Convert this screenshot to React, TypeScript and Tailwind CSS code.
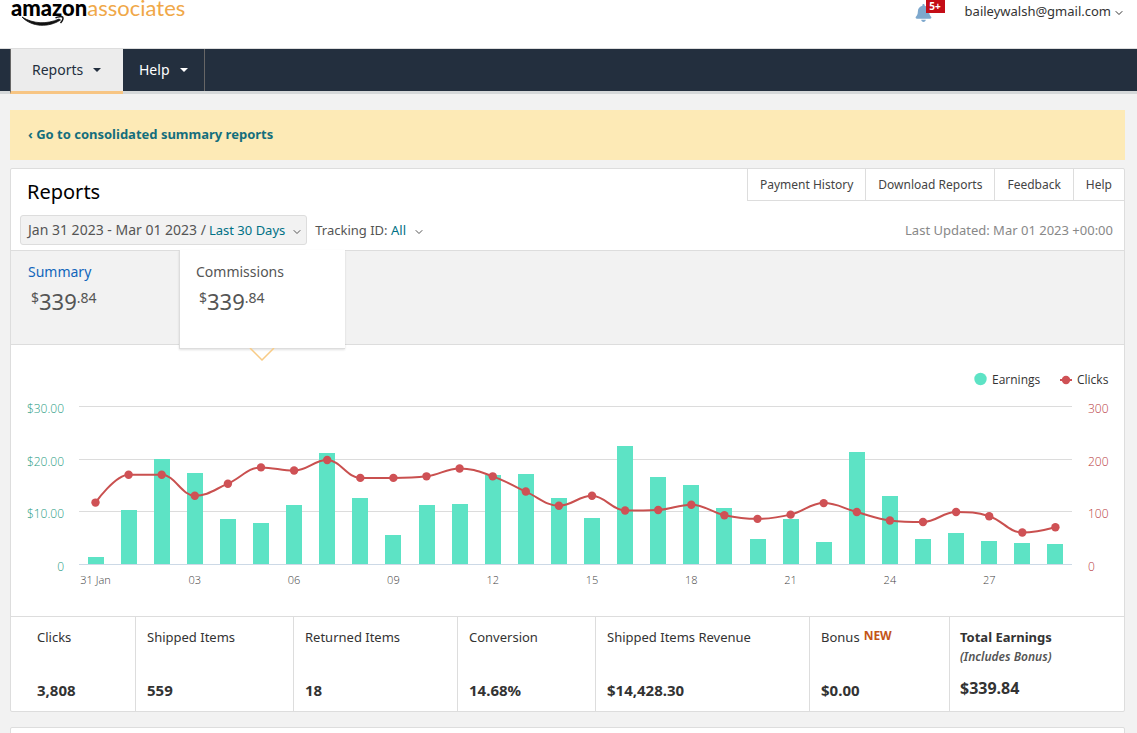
import { ChevronDown } from "lucide-react";
import { FaBell } from "react-icons/fa";

const earnings = [
  1.3, 10.3, 20, 17.3, 8.6, 7.8, 11.2, 21.1, 12.6, 5.5, 11.2, 11.4, 16.9, 17.1, 12.6,
  8.8, 22.5, 16.6, 15, 10.7, 4.8, 8.6, 4.2, 21.3, 13, 4.8, 5.9, 4.4, 4, 3.8,
];

const clicks = [
  117, 170, 170, 130, 153, 184, 178, 198, 164, 164, 167, 182, 167, 138, 111,
  130, 102, 103, 113, 93, 86, 94, 116, 99, 83, 80, 99, 91, 60, 70,
];

const stats = [
  { label: "Clicks", value: "3,808", cell: "w-[125px] pl-[26px]" },
  { label: "Shipped Items", value: "559", cell: "w-[158px] pl-[11px]" },
  { label: "Returned Items", value: "18", cell: "w-[164px] pl-[11px]" },
  { label: "Conversion", value: "14.68%", cell: "w-[138px] pl-[11px]" },
  { label: "Shipped Items Revenue", value: "$14,428.30", cell: "w-[214px] pl-[11px]" },
  { label: "Bonus", value: "$0.00", cell: "w-[140px] pl-[11px]", isNew: true },
];

const BASE = 219;
const FIRST = 84.5;
const STEP = 33.1;

const points = clicks.map((c, i) => ({ x: FIRST + STEP * i, y: BASE - c * 0.525 }));

// spline through the points, flat at local peaks and dips
function splinePath() {
  let d = `M ${points[0].x} ${points[0].y}`;
  let out = points[0];
  for (let i = 1; i < points.length; i++) {
    const prev = points[i - 1];
    const p = points[i];
    const next = points[i + 1];
    let left = p;
    let right = p;
    if (next) {
      let ly = (1.5 * p.y + prev.y) / 2.5;
      let ry = (1.5 * p.y + next.y) / 2.5;
      const fix = (ry - ly) / 2;
      ly = p.y - fix;
      ry = p.y + fix;
      if ((ly > prev.y && ly > p.y) || (ly < prev.y && ly < p.y)) {
        ly = ly > p.y ? Math.max(prev.y, p.y) : Math.min(prev.y, p.y);
        ry = 2 * p.y - ly;
      }
      if ((ry > next.y && ry > p.y) || (ry < next.y && ry < p.y)) {
        ry = ry > p.y ? Math.max(next.y, p.y) : Math.min(next.y, p.y);
        ly = 2 * p.y - ry;
      }
      left = { x: (1.5 * p.x + prev.x) / 2.5, y: ly };
      right = { x: (1.5 * p.x + next.x) / 2.5, y: ry };
    }
    d += ` C ${out.x} ${out.y} ${left.x} ${left.y} ${p.x} ${p.y}`;
    out = right;
  }
  return d;
}

function Chart() {
  const rows = [
    { y: 61.5, money: "$30.00", count: "300" },
    { y: 114.5, money: "$20.00", count: "200" },
    { y: 166.5, money: "$10.00", count: "100" },
    { y: 219.5, money: "0", count: "0" },
  ];
  return (
    <svg
      viewBox="0 0 1113 271"
      className="block w-full font-['Open_Sans',sans-serif] text-[11px] font-light"
      role="img"
      aria-label="Earnings and clicks per day"
    >
      {rows.map((r) => (
        <g key={r.money} className="text-[12px]">
          <path d={`M68 ${r.y}H1061`} stroke={r.money === "0" ? "#ccd9e6" : "#dcdcdc"} />
          <text x="53" y={r.y + 6} textAnchor="end" fill="#2a9c84">
            {r.money}
          </text>
          <text x="1077" y={r.y + 6} fill="#b93b3e">
            {r.count}
          </text>
        </g>
      ))}
      {earnings.map((e, i) => (
        <rect
          key={i}
          x={Math.round(FIRST + STEP * i - 8)}
          y={Math.round(BASE - e * 5.25)}
          width="16"
          height={BASE - Math.round(BASE - e * 5.25)}
          fill="#5de3c5"
        />
      ))}
      <path d={splinePath()} fill="none" stroke="#c9504f" strokeWidth="2" />
      {points.map((p) => (
        <circle key={p.x} cx={p.x} cy={p.y} r="4.2" fill="#cf5155" />
      ))}
      {points.map((p, i) =>
        i % 3 === 0 ? (
          <text key={i} x={p.x} y="239" textAnchor="middle" fill="#444">
            {i === 0 ? "31 Jan" : String(i).padStart(2, "0")}
          </text>
        ) : null
      )}
      {/* Legend */}
      <g className="text-[12px] font-normal" fill="#333">
        <circle cx="969.500" cy="34" r="6.2" fill="#5de3c5" />
        <text x="981" y="39">Earnings</text>
        <path d="M1049 35H1061" stroke="#cf5155" strokeWidth="2" />
        <circle cx="1055" cy="35" r="4.2" fill="#cf5155" />
        <text x="1066" y="39">Clicks</text>
      </g>
    </svg>
  );
}

function Amount() {
  return (
    <span className="mt-1 flex items-start pl-[3px] text-[#555]">
      <span className="text-[14px] leading-[24px]">$</span>
      <span className="text-[22px] leading-[30px]">339</span>
      <span className="text-[14px] leading-[24px]">.84</span>
    </span>
  );
}

export default function App() {
  return (
    <div className="min-h-screen overflow-hidden bg-[#f2f2f2] font-['Noto_Sans',sans-serif] text-[13px] leading-[20px] text-[#333]">
      {/* Header */}
      <header className="flex h-[49px] items-start justify-between border-b border-[#ddd] bg-white pr-3 pl-[11px]">
        <a
          href="#home"
          aria-label="amazon associates"
          className="relative flex font-['Lato',sans-serif] text-[22px] leading-[16px] text-[#f0a848]"
        >
          <span className="font-black text-black">amazon</span>
          <span className="font-normal">associates</span>
          <svg viewBox="0 0 44 12" className="absolute top-[15px] left-[10px] h-[12px] w-[44px]">
            <path d="M1 2C12 9 26 9.500 38 4L39.500 5C28 12.500 11 12.500 1 2Z" fill="#111" stroke="#111" strokeWidth="0.800" />
            <path d="M34.500 2.800C37 1.500 41 1.200 41.800 2.300C42.300 3.800 41 6.500 39.500 8" fill="none" stroke="#111" strokeWidth="1.500" />
          </svg>
        </a>
        <div className="flex items-start">
          <button className="relative mr-[33px] h-[22px] w-[17px]" aria-label="Notifications">
            <FaBell className="mt-[3px] h-[18px] w-[17px] text-[#7ea8cd]" />
            <span className="absolute top-0 left-[11px] h-[13px] w-[19px] bg-[#c40d17] text-center text-[10px] leading-[12px] font-bold text-white">
              5+
            </span>
          </button>
          <button className="mt-px flex items-center gap-[2px]">
            baileywalsh@gmail.com
            <ChevronDown size={12} className="mt-1" />
          </button>
        </div>
      </header>

      {/* Navigation */}
      <nav className="flex h-[45px] border-b-[3px] border-[#d5d8d9] bg-[#232f3e] pl-[10px] text-[14px]">
        <button className="-mb-[3px] flex w-[113px] items-center gap-[10px] border-b-[3px] border-l border-b-[#f7c583] border-l-[#666] bg-[#ececec] pl-[21px] text-[#232f3e]">
          Reports
          <svg viewBox="0 0 8 4" className="h-1 w-2">
            <path d="M0 0H8L4 4Z" fill="currentColor" />
          </svg>
        </button>
        <button className="flex w-[82px] items-center gap-[10px] border-r border-[#666] pl-4 text-white">
          Help
          <svg viewBox="0 0 8 4" className="h-1 w-2">
            <path d="M0 0H8L4 4Z" fill="currentColor" />
          </svg>
        </button>
      </nav>

      <main className="pt-4 pr-3 pl-[10px]">
        <div className="bg-[#fdeab6] px-[18px] pt-[14px] pb-4">
          <a href="#summary" className="font-bold text-[#146e7c]">
            ‹ Go to consolidated summary reports
          </a>
        </div>

        <section className="mt-2 rounded-[2px] border border-[#ddd] bg-white">
          <div className="flex items-start justify-between">
            <h1 className="pt-[9px] pl-4 text-[20px] leading-[28px] text-black">Reports</h1>
            <div className="flex border-b border-l border-[#ddd] text-[12px] leading-[31px] text-[#444]">
              <a href="#payments" className="border-r border-[#ddd] px-3">Payment History</a>
              <a href="#downloads" className="border-r border-[#ddd] px-3">Download Reports</a>
              <a href="#feedback" className="border-r border-[#ddd] px-3">Feedback</a>
              <a href="#help" className="px-3">Help</a>
            </div>
          </div>

          <div className="mt-[9px] flex items-center pr-[11px] pb-[5px] pl-[9px] text-[#555]">
            <button className="flex h-[30px] items-center rounded-[3px] border border-[#ddd] bg-[#f2f2f2] pr-[3px] pl-[7px]">
              <span className="text-[14px]">Jan 31 2023 - Mar 01 2023 /</span>
              <span className="ml-[3px] text-[#007185]">Last 30 Days</span>
              <ChevronDown size={12} className="mt-1 ml-[6px]" />
            </button>
            <button className="ml-2 flex items-center">
              Tracking ID:&nbsp;<span className="text-[#007185]">All</span>
              <ChevronDown size={12} className="mt-1 ml-[7px]" />
            </button>
            <span className="ml-auto text-[#888]">Last Updated: Mar 01 2023 +00:00</span>
          </div>

          <div className="flex h-[95px] border-y border-[#ddd] bg-[#f2f2f2]">
            <button className="flex w-[168px] flex-col items-start pt-[11px] pl-[17px] text-[14px]">
              <span className="text-[#1166bb]">Summary</span>
              <Amount />
            </button>
            <button className="relative -mt-px flex h-[99px] w-[166px] flex-col items-start border-b border-l border-[#ddd] bg-white pt-3 pl-4 text-[14px] shadow-[0_1px_2px_rgba(0,0,0,0.12)]">
              <span className="text-[#555]">Commissions</span>
              <Amount />
              <svg viewBox="0 0 26 13" className="absolute top-full left-[69px] h-[13px] w-[26px]">
                <path d="M1 0L13 12L25 0" fill="none" stroke="#f8cb86" strokeWidth="1.500" />
              </svg>
            </button>
          </div>

          <Chart />

          <table className="w-full table-fixed border-separate border-spacing-0 border-t border-[#ddd] text-left">
            <thead>
              <tr className="h-[52px] align-top">
                {stats.map((s) => (
                  <th key={s.label} className={`border-r border-[#ddd] pt-[10px] font-normal ${s.cell}`}>
                    {s.label}
                    {s.isNew && <sup className="ml-1 -top-[2px] text-[12px] font-bold text-[#c45518]">NEW</sup>}
                  </th>
                ))}
                <th className="pt-[10px] pl-[10px]">
                  Total Earnings
                  <em className="block text-[12px] leading-[20px] font-semibold text-[#555]">(Includes Bonus)</em>
                </th>
              </tr>
            </thead>
            <tbody>
              <tr className="h-[42px] align-top text-[15px] font-bold">
                {stats.map((s) => (
                  <td key={s.label} className={`border-r border-[#ddd] pt-[11px] ${s.cell}`}>
                    {s.value}
                  </td>
                ))}
                <td className="pt-[9px] pl-[10px] text-[16px]">$339.84</td>
              </tr>
            </tbody>
          </table>
        </section>

        <section className="mt-[15px] h-10 rounded-t-[2px] border border-[#ddd] bg-white" />
      </main>
    </div>
  );
}
